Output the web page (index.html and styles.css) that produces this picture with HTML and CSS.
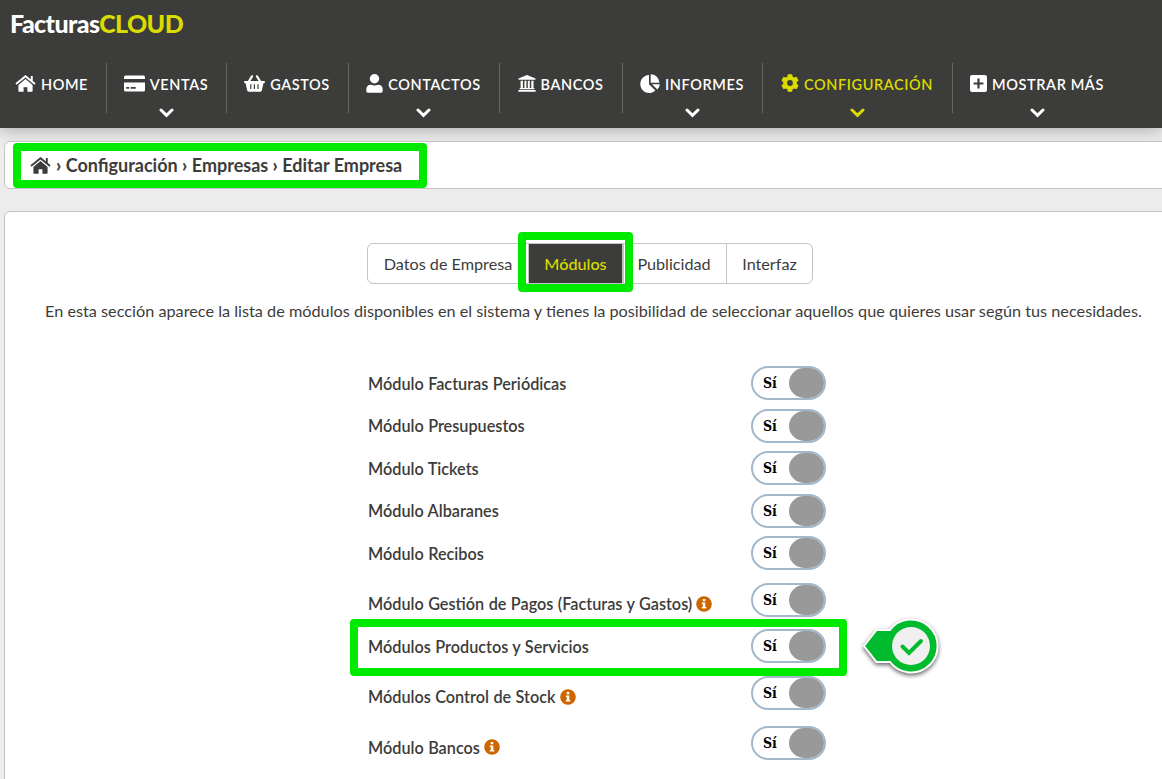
FILE: index.html
```html
<!DOCTYPE html>
<html lang="es">
<head>
    <meta charset="UTF-8">
    <meta name="viewport" content="width=device-width, initial-scale=1.0">
    <title>FacturasCLOUD - Editar Empresa</title>
    <link rel="stylesheet" href="styles.css">
</head>
<body>
    <svg class="sprite" xmlns="http://www.w3.org/2000/svg">
        <symbol id="i-home" viewBox="0 0 21 17">
            <path d="M10.5 4 3.4 10v6q0 .8.8.8h4.4v-4.6h3.8v4.6h4.4q.8 0 .8-.8v-6z"/>
            <path d="M1 8.9 10.5 1.2 20 8.9M16.8 1v5" fill="none" stroke="currentColor" stroke-width="1.9"/>
        </symbol>
        <symbol id="i-card" viewBox="0 0 21 17">
            <path fill-rule="evenodd" d="M1.5.5h18q1.5 0 1.5 1.5v2H0V2Q0 .5 1.500.5zM0 7.500h21V15q0 1.500-1.500 1.500h-18Q0 16.500 0 15zM2.200 12v1.700h3V12zm4.500 0v1.700h5V12z"/>
        </symbol>
        <symbol id="i-basket" viewBox="0 0 21 17">
            <path fill-rule="evenodd" d="M1 6h19q1 0 1 1t-1 1.200h-.6l-1.500 7q-.3 1.600-1.800 1.600H4.900q-1.500 0-1.800-1.600l-1.500-7H1Q0 8.200 0 7.100T1 6zm5.200 3.300v4.600h1.200V9.300zm3.600 0v4.600H11V9.300zm3.600 0v4.600h1.200V9.300z"/>
            <path d="M4.500 7 8 1.300M16.500 7 13 1.300" fill="none" stroke="currentColor" stroke-width="2.200" stroke-linecap="round"/>
        </symbol>
        <symbol id="i-user" viewBox="0 0 17 19">
            <circle cx="8.500" cy="4.800" r="4.700"/>
            <path d="M5 10.800q3.500 1.600 7 0 4.700.2 4.700 4.700v1.400q0 1.800-1.700 1.800H2Q.3 18.700.3 16.900v-1.400Q.3 11 5 10.800z"/>
        </symbol>
        <symbol id="i-bank" viewBox="0 0 18 17">
            <path d="M9 0 17.500 3.500v1.300H.5V3.500zM2.600 5.800h2.300V13h1.500V5.800h2V13h1.400V5.800h2V13h1.500V5.800h2.200V13l1 .3v1H1.600v-1l1-.3zM.4 15h17.200v1.700H.4z"/>
        </symbol>
        <symbol id="i-pie" viewBox="0 0 20 19">
            <path d="M9 1v9.300l6.400 6.300A9 9 0 1 1 9 1z"/>
            <path d="M10.700.2a8.800 8.800 0 0 1 8.800 8.500h-8.800zM12 10.200h7.800q-.2 3.300-2.500 5.300z"/>
        </symbol>
        <symbol id="i-gear" viewBox="0 0 18 18">
            <path fill-rule="evenodd" d="M6.900.3h4.200l.6 2.400 1.500.9 2.300-.8 2.100 3.600-1.800 1.700v1.800l1.800 1.700-2.100 3.600-2.300-.8-1.500.9-.6 2.400H6.900l-.6-2.400-1.500-.9-2.300.8-2.100-3.600 1.800-1.700V8.100L.4 6.400l2.100-3.600 2.300.8 1.500-.9zM9 6.100a2.900 2.900 0 1 0 0 5.800 2.900 2.900 0 0 0 0-5.800z"/>
        </symbol>
        <symbol id="i-plus" viewBox="0 0 17 17">
            <path fill-rule="evenodd" d="M2 0h13q2 0 2 2v13q0 2-2 2H2q-2 0-2-2V2q0-2 2-2zm5.400 3.600v3.800H3.600v2.200h3.800v3.800h2.200V9.600h3.800V7.400H9.600V3.600z"/>
        </symbol>
        <symbol id="i-down" viewBox="0 0 15 10">
            <path d="M2 2l5.500 5.300L13 2" fill="none" stroke="currentColor" stroke-width="3" stroke-linecap="round"/>
        </symbol>
        <symbol id="i-info" viewBox="0 0 16 16">
            <circle cx="8" cy="8" r="7.800" fill="#cd6600"/>
            <path d="M6.800 2.900h2.500v2.300H6.800zM5.800 6.500h3.500v4.600h1v1.400H5.800v-1.400h1V7.900h-1z" fill="#fff"/>
        </symbol>
    </svg>

    <header class="header">
        <div class="logo">Facturas<span>CLOUD</span></div>
        <nav class="nav">
            <a class="nav-item home"><span><svg width="21" height="17"><use href="#i-home"/></svg>HOME</span></a>
            <a class="nav-item ventas"><span><svg width="21" height="17"><use href="#i-card"/></svg>VENTAS</span><svg class="down"><use href="#i-down"/></svg></a>
            <a class="nav-item gastos"><span><svg width="21" height="17"><use href="#i-basket"/></svg>GASTOS</span></a>
            <a class="nav-item contactos"><span><svg width="17" height="19"><use href="#i-user"/></svg>CONTACTOS</span><svg class="down"><use href="#i-down"/></svg></a>
            <a class="nav-item bancos"><span><svg width="18" height="17"><use href="#i-bank"/></svg>BANCOS</span></a>
            <a class="nav-item informes"><span><svg width="20" height="19"><use href="#i-pie"/></svg>INFORMES</span><svg class="down"><use href="#i-down"/></svg></a>
            <a class="nav-item config active"><span><svg width="18" height="18"><use href="#i-gear"/></svg>CONFIGURACIÓN</span><svg class="down"><use href="#i-down"/></svg></a>
            <a class="nav-item mas"><span><svg width="17" height="17"><use href="#i-plus"/></svg>MOSTRAR MÁS</span><svg class="down"><use href="#i-down"/></svg></a>
        </nav>
    </header>

    <div class="breadcrumb">
        <svg width="21" height="17"><use href="#i-home"/></svg>
        <span class="crumbs"><b>›</b> Configuración <b>›</b> Empresas <b>›</b> Editar Empresa</span>
        <div class="mark mark-breadcrumb"></div>
    </div>

    <main class="panel">
        <div class="tabs">
            <a class="tab datos">Datos de Empresa</a>
            <a class="tab modulos active">Módulos<span class="mark mark-tab"></span></a>
            <a class="tab publicidad">Publicidad</a>
            <a class="tab interfaz">Interfaz</a>
        </div>
        <p class="intro">En esta sección aparece la lista de módulos disponibles en el sistema y tienes la posibilidad de seleccionar aquellos que quieres usar según tus necesidades.</p>

        <div class="modules">
            <div class="row"><label>Módulo Facturas Periódicas</label><div class="switch">Sí<i></i></div></div>
            <div class="row"><label>Módulo Presupuestos</label><div class="switch">Sí<i></i></div></div>
            <div class="row"><label>Módulo Tickets</label><div class="switch">Sí<i></i></div></div>
            <div class="row"><label>Módulo Albaranes</label><div class="switch">Sí<i></i></div></div>
            <div class="row"><label>Módulo Recibos</label><div class="switch">Sí<i></i></div></div>
            <div class="row info"><label>Módulo Gestión de Pagos (Facturas y Gastos)<svg><use href="#i-info"/></svg></label><div class="switch">Sí<i></i></div></div>
            <div class="row">
                <label>Módulos Productos y Servicios</label><div class="switch">Sí<i></i></div>
                <div class="mark mark-row"></div>
                <svg class="pointer" viewBox="0 0 84 64">
                    <path class="pointer-shape" d="M4 30 16.500 14H30A26.500 26.500 0 1 1 30 46H16.500z"/>
                    <circle cx="51" cy="30" r="19" fill="#f0f0f0"/>
                    <path d="M42.500 30.500 49 37 61 25" fill="none" stroke="#00bb2d" stroke-width="4" stroke-linecap="round"/>
                </svg>
            </div>
            <div class="row info"><label>Módulos Control de Stock<svg><use href="#i-info"/></svg></label><div class="switch">Sí<i></i></div></div>
            <div class="row info"><label>Módulo Bancos<svg><use href="#i-info"/></svg></label><div class="switch">Sí<i></i></div></div>
        </div>
    </main>
</body>
</html>
```
FILE: styles.css
```css
* {
    box-sizing: border-box;
}

body {
    margin: 0;
    height: 779px;
    overflow: hidden;
    background: #ededed;
    color: #3c3c3b;
    font-family: Lato, Carlito, sans-serif;
    font-size: 16px;
}

svg {
    fill: currentColor;
    flex: none;
}

.sprite {
    display: none;
}

.header {
    height: 128px;
    background: #3c3c3a;
    color: #fff;
    box-shadow: 0 0 18px rgba(0, 0, 0, 0.35);
    position: relative;
}

.logo {
    height: 63px;
    padding: 7px 0 0 10px;
    font-size: 25px;
    line-height: 32px;
    font-weight: 900;
    letter-spacing: -0.6px;
}

.logo span,
.nav-item.active {
    color: #dadb00;
}

.nav {
    display: flex;
}

.nav-item {
    height: 50px;
    padding-right: 1px;
    border-right: 1px solid #666;
    display: flex;
    flex-direction: column;
    align-items: center;
    font-size: 14.5px;
    font-weight: 600;
    letter-spacing: 0.6px;
    white-space: nowrap;
}

.nav-item span {
    display: flex;
    flex: none;
    align-items: center;
    gap: 5px;
    height: 24px;
    margin-top: 9px;
}

.nav-item span svg {
    margin-bottom: 2px;
}

.home { width: 107px; padding-right: 3px; }
.ventas { width: 120px; }
.gastos { width: 122px; }
.contactos { width: 151px; }
.bancos { width: 123px; }
.informes { width: 140px; }
.config { width: 190px; }
.mas { width: 170px; border-right: none; padding-right: 2px; }

.down {
    width: 15px;
    height: 10px;
    margin-top: 12px;
}

.breadcrumb {
    height: 48px;
    margin: 13px -10px 0 4px;
    padding-left: 25px;
    background: #fff;
    border: 1px solid #c4c4c4;
    border-radius: 6px;
    display: flex;
    align-items: center;
    gap: 5px;
    position: relative;
    font-size: 18px;
    font-weight: 700;
}

.crumbs {
    white-space: nowrap;
}

.crumbs b {
    font-weight: 900;
}

.mark {
    position: absolute;
    border: 8px solid #00ea00;
    border-radius: 4px;
    z-index: 1;
}

.mark-breadcrumb {
    left: 8px;
    top: 1px;
    width: 414px;
    height: 45px;
}

.panel {
    height: 600px;
    margin: 22px -10px 0 4px;
    padding-top: 31px;
    background: #fff;
    border: 1px solid #c4c4c4;
    border-radius: 6px;
}

.tabs {
    width: 446px;
    height: 41px;
    margin-left: 362px;
    border: 1px solid #c4c4c4;
    border-radius: 6px;
    display: flex;
}

.tab {
    height: 39px;
    line-height: 39px;
    font-size: 16.2px;
    text-align: center;
    white-space: nowrap;
}

.datos { width: 161px; border-right: 1px solid #c4c4c4; }
.publicidad { width: 103px; padding-right: 2px; border-right: 1px solid #c4c4c4; }
.interfaz { width: 85px; }

.modulos {
    width: 95px;
    border-right: 2px solid #c4c4c4;
    background: #3c3c3a;
    color: #dadb00;
    font-weight: 500;
    position: relative;
}

.mark-tab {
    left: -11px;
    top: -12px;
    width: 115px;
    height: 60px;
}

.intro {
    margin: 16px 0 0 40px;
    font-size: 16.25px;
    line-height: 22px;
    white-space: nowrap;
}

.modules {
    width: 458px;
    margin: 40px 0 0 363px;
}

.row {
    height: 42.5px;
    display: flex;
    align-items: center;
    justify-content: space-between;
    position: relative;
}

.row label {
    display: flex;
    align-items: center;
    gap: 4px;
    font-size: 16.24px;
    font-weight: 600;
    word-spacing: 0.4px;
}

.row label svg {
    width: 16px;
    height: 16px;
}

.row.info {
    height: 50.5px;
}

.row.info label {
    padding-top: 8px;
}

.switch {
    width: 75px;
    height: 34px;
    padding: 0 0 0 10px;
    border: 2px solid #a3b8cb;
    border-radius: 17px;
    display: flex;
    align-items: center;
    justify-content: space-between;
    background: #fff;
    color: #000;
    font-family: "DejaVu Serif Condensed", "DejaVu Serif", serif;
    font-stretch: condensed;
    font-size: 14px;
    font-weight: 700;
}

.switch i {
    width: 35px;
    height: 30px;
    border-radius: 15px;
    background: #999;
}

.mark-row {
    left: -18px;
    top: -6px;
    width: 497px;
    height: 57px;
}

.pointer {
    position: absolute;
    left: 492px;
    top: -9px;
    width: 84px;
    height: 64px;
    overflow: visible;
    filter: drop-shadow(0 2px 2px rgba(0, 0, 0, 0.6));
}

.pointer-shape {
    fill: #00bb2d;
    stroke: #fff;
    stroke-width: 2;
}
```
